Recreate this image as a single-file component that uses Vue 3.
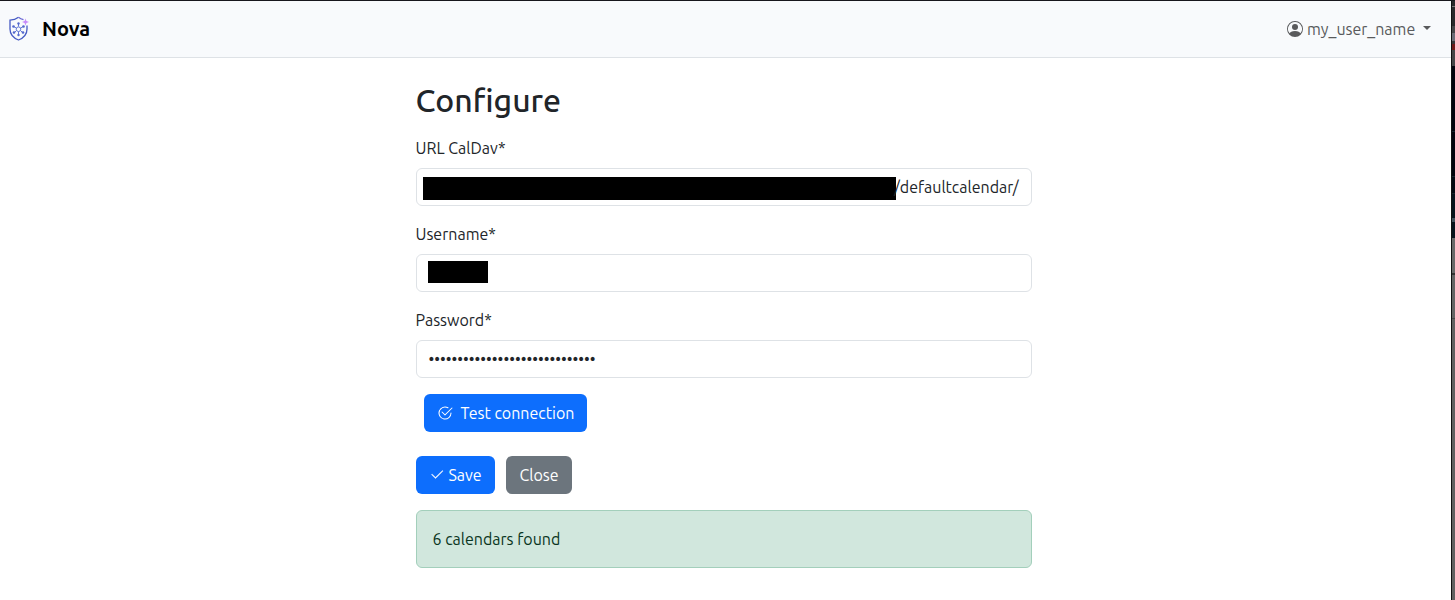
<script setup>
const dots = '•'.repeat(29)
</script>

<template>
  <div class="screen">
    <div class="page">
      <header class="navbar">
        <a class="brand">
          <svg class="logo" width="20" height="26" viewBox="0 0 20 26" fill="none">
            <path d="M9.500 1.200C7 3.200 4 4 1 4.200V13c0 5.500 3.500 9 8.500 11 5-2 8.500-5.500 8.500-11V9.500" stroke="#465bc4" stroke-width="1.300" />
            <path d="M9.500 1.200c1.500 1.300 3 2 5 2.400" stroke="#6a68d4" stroke-width="1.300" />
            <g stroke="#6177d4" stroke-width="1">
              <path d="M9.500 10.500V7.500M9.500 15.500v3M7.200 12 4.800 10.500M11.800 12l2.400-1.500M7.500 14.500l-2 2M11.500 14.500l2 2" />
              <circle cx="9.500" cy="13.200" r="2.300" />
            </g>
            <g fill="#5368cd">
              <circle cx="9.500" cy="7.500" r="1.200" /><circle cx="9.500" cy="19" r="1.200" />
              <circle cx="4.500" cy="10.500" r="1.300" /><circle cx="14.500" cy="10.500" r="1.300" />
              <circle cx="5" cy="16.500" r="1.300" /><circle cx="14" cy="16.500" r="1.300" />
            </g>
            <path d="m16.500 2.500.9 2.600L20 6l-2.600.9-.9 2.600-.9-2.600L13 6l2.600-.9z" fill="#c78afa" />
          </svg>
          <span class="name">Nova</span>
        </a>
        <a class="user">
          <svg width="16" height="16" viewBox="0 0 16 16" fill="currentColor">
            <path d="M11 6a3 3 0 1 1-6 0 3 3 0 0 1 6 0" />
            <path fill-rule="evenodd" d="M0 8a8 8 0 1 1 16 0A8 8 0 0 1 0 8m8-7a7 7 0 0 0-5.468 11.370C3.242 11.226 4.805 10 8 10s4.757 1.225 5.468 2.370A7 7 0 0 0 8 1" />
          </svg>
          <span class="username">my_user_name</span>
          <i class="caret"></i>
        </a>
      </header>

      <main class="content">
        <h2>Configure</h2>
        <label>URL CalDav*</label>
        <div class="field url"><span class="mask long"></span><span class="value">/defaultcalendar/</span></div>
        <label>Username*</label>
        <div class="field"><span class="mask short"></span></div>
        <label>Password*</label>
        <div class="field"><span class="dots">{{ dots }}</span></div>
        <button class="btn test">
          <svg width="16" height="16" viewBox="0 0 16 16" fill="currentColor">
            <path d="M2.500 8a5.500 5.500 0 0 1 8.250-4.764.5.5 0 0 0 .5-.866A6.500 6.500 0 1 0 14.500 8a.5.5 0 0 0-1 0 5.500 5.500 0 1 1-11 0" />
            <path d="M15.354 3.354a.5.5 0 0 0-.708-.708L8 9.293 5.354 6.646a.5.5 0 1 0-.708.708l3 3a.5.5 0 0 0 .708 0z" />
          </svg>
          <span>Test connection</span>
        </button>
        <div class="actions">
          <button class="btn save">
            <svg width="16" height="16" viewBox="0 0 16 16" fill="currentColor" stroke="currentColor" stroke-width=".25">
              <path d="M13.854 3.646a.5.5 0 0 1 0 .708l-7 7a.5.5 0 0 1-.708 0l-3.500-3.500a.5.5 0 1 1 .708-.708L6.500 10.293l6.646-6.647a.5.5 0 0 1 .708 0" />
            </svg>
            <span>Save</span>
          </button>
          <button class="btn close"><span>Close</span></button>
        </div>
        <div class="alert"><span>6 calendars found</span></div>
      </main>
    </div>
    <aside class="edge"></aside>
  </div>
</template>

<style>
html, body { margin: 0; overflow: hidden; }
</style>

<style scoped>
.screen {
  display: flex;
  box-sizing: border-box;
  width: 1455px;
  height: 600px;
  border-top: 1px solid #17171c;
  background: #fff;
  color: #212529;
  font: 16px/24px Ubuntu, "Noto Sans", sans-serif;
}
.page { width: 1451px; }
.edge {
  box-sizing: border-box;
  width: 4px;
  border-left: 1px solid #111;
  background: linear-gradient(#29292b 0 5px, #777 5px 6px, #29292b 6px 25px, #454547 25px 32px, #6b6b76 32px 40px, #353537 40px 43px, #6d1919 43px 49px, #454547 49px 65px, #02040d 65px 130px, #17242d 130px 131px, #02040d 131px 175px, #17242d 175px 176px, #030912 176px 192px, #17242d 192px 193px, #06131c 193px 217px, #41505a 217px 221px, #06131c 221px 237px, #686868 237px 272px, #333 272px 274px, #646464 274px 317px, #484848 317px 318px, #606060 318px);
}
.navbar {
  box-sizing: border-box;
  height: 57px;
  display: flex;
  align-items: center;
  justify-content: space-between;
  padding: 0 20px 0 9px;
  background: #f8fafc;
  border-bottom: 1px solid #dee2e6;
}
.brand, .user { display: flex; align-items: center; }
.logo { flex: none; }
.name { margin-left: 13px; color: #000; font-size: 20px; font-weight: 600; line-height: 30px; }
.user { color: #595a5c; }
.username { width: 108px; margin-left: 4px; white-space: nowrap; }
.caret { margin: -3px 0 0 8px; border: 4.8px solid transparent; border-top-color: currentColor; border-bottom: 0; }
.content { width: 616px; margin: 23px 0 0 415.5px; }
h2 { margin: 0 0 17px; font-size: 32px; font-weight: 500; line-height: 38px; }
label { display: block; width: max-content; margin-bottom: 8px; }
.field {
  box-sizing: border-box;
  display: flex;
  align-items: center;
  height: 38px;
  margin-bottom: 16px;
  padding: 0 12px;
  border: 1px solid #dee2e6;
  border-radius: 6px;
}
.url { padding-left: 6.5px; }
.mask { flex: none; background: #000; }
.long { width: 473px; height: 23px; margin-top: 3px; }
.short { width: 60px; height: 22px; margin: -2px 0 0 -.5px; }
.value { margin-left: -2px; }
.btn {
  display: flex;
  align-items: center;
  justify-content: center;
  box-sizing: border-box;
  height: 38px;
  padding: 0 0 0 1px;
  border: 0;
  border-radius: 6px;
  color: #fff;
  background: #0d6efd;
  font: inherit;
  white-space: nowrap;
}
.test { width: 163px; margin: 0 0 24px 8px; gap: 8px; }
.actions { display: flex; gap: 11px; margin-bottom: 16px; }
.save { width: 79px; gap: 3px; }
.close { width: 66px; background: #6c757d; }
.alert {
  box-sizing: border-box;
  height: 58px;
  padding: 16px;
  border: 1px solid #a3cfbb;
  border-radius: 6px;
  background: #d1e7dd;
  color: #0a3622;
}
</style>
